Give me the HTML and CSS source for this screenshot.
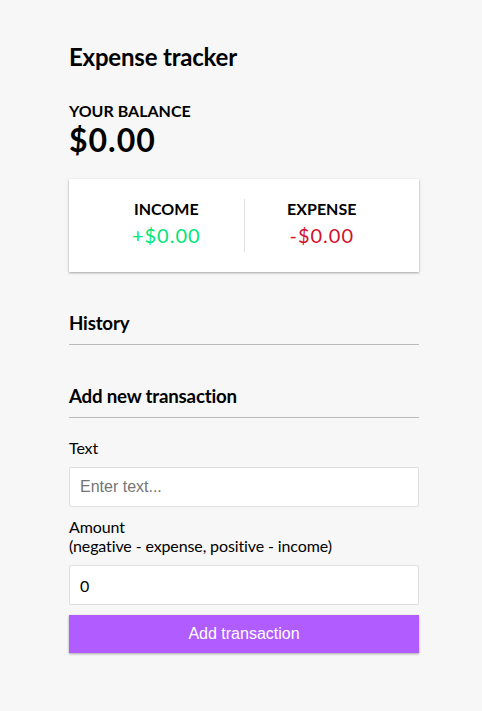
FILE: index.html
```html
<!DOCTYPE html>
<html lang="en">
<head>
    <meta charset="UTF-8">
    <meta name="viewport" content="width=device-width, initial-scale=1.0">
    <title>Expense tracker</title>
    <link rel="stylesheet" href="styles.css">
</head>
<body>
    <div class="container">
        <h2 class="title">Expense tracker</h2>
        <h4>Your Balance</h4>
        <h1 class="balance">$0.00</h1>

        <div class="inc-exp">
            <div>
                <h4>Income</h4>
                <p class="money plus">+$0.00</p>
            </div>
            <div>
                <h4>Expense</h4>
                <p class="money minus">-$0.00</p>
            </div>
        </div>

        <h3>History</h3>
        <ul class="list"></ul>

        <h3>Add new transaction</h3>
        <form id="form">
            <div class="form-control">
                <label for="text">Text</label>
                <input type="text" id="text" placeholder="Enter text...">
            </div>
            <div class="form-control">
                <label for="amount">Amount <br>(negative - expense, positive - income)</label>
                <input type="number" id="amount" value="0">
            </div>
            <button class="btn">Add transaction</button>
        </form>
    </div>
</body>
</html>
```

FILE: styles.css
```css
* {
    box-sizing: border-box;
}

body {
    background-color: #f7f7f7;
    margin: 0;
    padding-left: 6px;
    font-family: Lato, "Noto Sans", sans-serif;
}

.container {
    width: 350px;
    margin: 0 auto;
    padding-top: 42px;
}

.title {
    font-size: 24px;
    letter-spacing: -0.2px;
    margin: 0 0 30px;
}

h1 {
    font-size: 32px;
    letter-spacing: 1px;
    margin: 0;
}

h3 {
    border-bottom: 1px solid #bbb;
    padding-bottom: 10px;
    margin: 40px 0 10px;
    letter-spacing: -0.2px;
}

h4 {
    margin: 0;
    text-transform: uppercase;
}

.inc-exp {
    background-color: #fff;
    box-shadow: 0 1px 3px rgba(0, 0, 0, 0.12), 0 1px 2px rgba(0, 0, 0, 0.24);
    padding: 20px;
    display: flex;
    justify-content: space-between;
    margin: 20px 0;
}

.inc-exp > div {
    flex: 1;
    text-align: center;
}

.inc-exp > div:first-of-type {
    border-right: 1px solid #dedede;
}

.money {
    font-size: 20px;
    letter-spacing: 1px;
    margin: 5px 0;
}

.money.plus {
    color: #00e676;
}

.money.minus {
    color: #d3122e;
}

.list {
    list-style-type: none;
    padding: 0;
    margin: 0 0 40px;
}

label {
    display: inline-block;
    margin: 10px 0;
    letter-spacing: -0.12px;
}

input[type='text'],
input[type='number'] {
    border: 1px solid #dedede;
    border-radius: 2px;
    display: block;
    font-family: "Liberation Sans", Arial, sans-serif;
    font-size: 16px;
    height: 40px;
    padding: 10px;
    width: 100%;
}

input[type='number'] {
    font-family: Lato, sans-serif;
}

.btn {
    cursor: pointer;
    background-color: #b05cff;
    box-shadow: 0 1px 3px rgba(0, 0, 0, 0.12), 0 1px 2px rgba(0, 0, 0, 0.24);
    color: #fff;
    border: 0;
    display: block;
    font-family: "Liberation Sans", Arial, sans-serif;
    font-size: 16px;
    height: 38px;
    margin: 10px 0 30px;
    padding: 10px;
    width: 100%;
}
```
